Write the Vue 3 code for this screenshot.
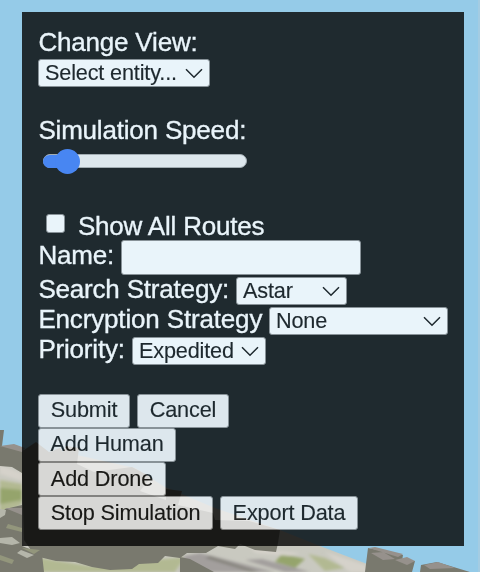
<script setup>
import { ref } from 'vue'
const speed = ref(12)
const routes = ref(false)
const name = ref('')
</script>

<template>
  <main class="viewport">
    <svg class="scene" viewBox="0 0 480 572" aria-hidden="true">
      <defs>
        <filter id="ground" x="-5%" y="-5%" width="110%" height="110%"><feGaussianBlur stdDeviation="1.6" /></filter>
        <filter id="edge" x="-5%" y="-5%" width="110%" height="110%"><feGaussianBlur stdDeviation="0.6" /></filter>
      </defs>
      <rect width="480" height="572" fill="#95cbe8" />
      <rect x="478" width="2" height="572" fill="#a4cce2" />
      <path d="M0 458 25 452 45 456 77 455 135 468 165 487 215 508 280 530 320 546 367 564 390 572H0Z" fill="#c9c9c0" />
      <g filter="url(#ground)">
        <path d="M0 484 22 490V503L12 507 0 508ZM282 554 305 559 295 568 275 562Z" fill="#95a46c" />
        <path d="M0 480 22 484V490L0 488ZM0 504 22 500 20 506 0 513ZM22 555 90 566 185 557 175 572H22ZM308 554 325 558 345 568 325 571Z" fill="#b2b992" />
        <path d="M0 465 22 473V481L0 474ZM250 548 300 553 290 556 256 553ZM325 552 365 565 375 572 350 572Z" fill="#d5d2ca" />
        <path d="M184 556 200 553 275 572H180ZM262 559 310 572H285L245 560Z" fill="#a39f9d" />
        <path d="M210 556 260 572H251L205 558Z" fill="#85837c" />
      </g>
      <g filter="url(#edge)" fill="#79796e">
        <path d="M0 430H4L2 446 24 450 36 442 49 452 60 448 63 452 66 446 79 448 77 464 94 472 132 467 151 477 140 491 166 500 166 489 182 491 178 505 213 513 215 520 249 521 280 530 278 543 276 552 255 550 240 544 235 549 218 546 206 553 187 553 180 558 165 556 158 563 139 564 132 569 110 570 92 567 75 562 56 561 35 556 24 540 22 473 12 467 0 466Z" />
        <path d="M0 516 5 509 22 505V546L42 554 44 572H0ZM180 557 190 559 214 572H180Z" />
        <path d="M368 548 403 555 402 561 415 561 412 572H365ZM421 565 437 562 470 572H420Z" />
      </g>
      <g filter="url(#edge)">
        <path d="M0 509 6 510 5 515 0 518ZM0 538 12 537 20 543 12 545 0 543ZM21 550 34 555 27 558 17 553Z" fill="#b5b6aa" />
        <path d="M0 446 14 444 25 448 22 452ZM5 508 22 508V515ZM369 548 375 547 403 554 398 557ZM371 553 383 552 395 559 383 560ZM395 560 407 557 415 561 407 565ZM424 565 438 562 455 568 430 569Z" fill="#96918c" />
        <path d="M8 524 22 528V532L6 528ZM0 555 14 560 12 564 0 560ZM22 548 40 550 34 554Z" fill="#93967c" />
      </g>
    </svg>

    <form class="panel" @submit.prevent>
      <div class="line view-label">Change View:</div>
      <div class="select view"><span>Select entity...</span><svg viewBox="0 0 18 11"><path d="M1 1.2 9 9.2 17 1.2" /></svg></div>
      <div class="line speed-label">Simulation Speed:</div>
      <div class="slider" role="slider" :aria-valuenow="speed"><i class="track"></i><i class="fill"></i><i class="thumb"></i></div>
      <label class="line routes"><input v-model="routes" type="checkbox"><span>Show All Routes</span></label>
      <label class="line name">Name:<input v-model="name" type="text"></label>
      <div class="line">Search Strategy:<div class="select search"><span>Astar</span><svg viewBox="0 0 18 11"><path d="M1 1.2 9 9.2 17 1.2" /></svg></div></div>
      <div class="line encryption-line">Encryption Strategy<div class="select encryption"><span>None</span><svg viewBox="0 0 18 11"><path d="M1 1.2 9 9.2 17 1.2" /></svg></div></div>
      <div class="line">Priority:<div class="select priority"><span>Expedited</span><svg viewBox="0 0 18 11"><path d="M1 1.2 9 9.2 17 1.2" /></svg></div></div>
      <div class="actions">
        <div class="buttons upper"><button class="short">Submit</button><button class="short">Cancel</button></div>
        <div class="buttons upper"><button class="human">Add Human</button></div>
        <div class="buttons"><button class="drone">Add Drone</button></div>
        <div class="buttons"><button class="stop">Stop Simulation</button><button class="human">Export Data</button></div>
      </div>
    </form>
  </main>
</template>

<style>
body { margin: 0; }
</style>
<style scoped>
* { box-sizing: border-box; }
.viewport { position: relative; width: 480px; height: 572px; overflow: hidden; padding: 12px 16px 0 22px; font-family: "Liberation Sans", Arial, sans-serif; }
.scene { position: absolute; inset: 0; width: 480px; height: 572px; }
.panel { position: relative; display: flex; flex-direction: column; width: 442px; height: 534px; padding: 15px 16px; background: #020202; opacity: .8; color: #fff; font-size: 26px; line-height: 30px; letter-spacing: -.19px; }
.line { display: flex; flex: none; height: 30px; align-items: flex-start; justify-content: space-between; white-space: nowrap; text-indent: .4px; -webkit-text-stroke: .35px; }
.view-label { height: 32px; }
.select { display: flex; flex: none; align-items: center; justify-content: space-between; height: 28px; margin-top: 3px; padding: 0 6px 0 6px; background: #fff; border: 1px solid #858585; border-radius: 3px; color: #000; font-size: 21.67px; line-height: 24px; letter-spacing: -.16px; text-indent: 0; -webkit-text-stroke: .15px; }
.select svg { width: 18px; height: 11px; fill: none; stroke: #000; stroke-width: 1.5; flex: none; }
.view { width: 172px; margin-top: 0; }
.search { width: 111px; }
.encryption { width: 179px; }
.priority { width: 134px; }
.line:has(.search) { width: 309px; }
.line:has(.priority) { width: 228px; }
.encryption-line { width: 410px; letter-spacing: -.16px; }
.speed-label { margin-top: 28px; }
.slider { display: grid; align-items: center; width: 204px; height: 26px; margin: 3px 0 37px 5px; }
.slider i { grid-area: 1 / 1; }
.track { height: 14px; background: #efefef; border: 1px solid #a5a5a5; border-radius: 7px; }
.fill { width: 28px; height: 13px; background: #3575f5; border-radius: 7px; }
.thumb { width: 25px; height: 25px; margin-left: 11.5px; background: #3575f5; border-radius: 50%; }
.routes { height: 29px; justify-content: flex-start; }
.routes input { appearance: none; width: 19px; height: 19px; margin: 3px 12.5px 0 8px; background: #fff; border: 1px solid #858585; border-radius: 3px; }
.name { width: 323px; height: 34px; }
.name input { width: 240px; height: 35px; padding: 0; background: #fff; border: 1px solid #858585; border-radius: 3px; outline: 0; }
.actions { display: flex; flex-direction: column; margin-top: 30px; }
.buttons { display: flex; height: 34.1px; gap: 7px; }
button { height: 34px; padding: 0 0 1px; border: 1px solid #858585; border-radius: 3px; background: #efefef; color: #000; font: 21.67px/24px "Liberation Sans", Arial, sans-serif; letter-spacing: -.14px; white-space: nowrap; -webkit-text-stroke: .15px; }
.upper button { padding-bottom: 2px; }
.short { width: 92px; }
.human { width: 138px; }
.drone { width: 128px; }
.stop { width: 175px; }
</style>
